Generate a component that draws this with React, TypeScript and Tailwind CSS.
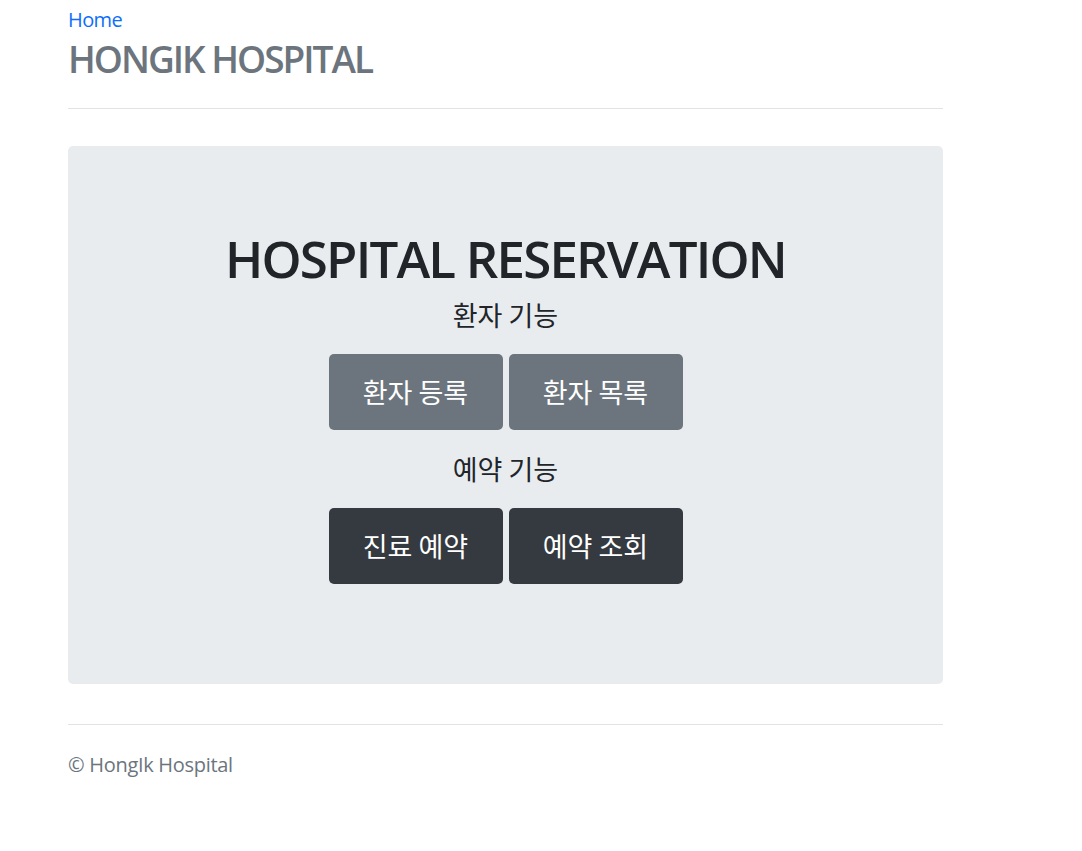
const kr = "text-[27px] [font-family:'Noto_Sans_CJK_KR',sans-serif]";

function Btn({ label, dark }: { label: string; dark?: boolean }) {
  return (
    <button
      className={
        dark
          ? `h-[76px] w-[174px] rounded-[5px] bg-[#343a40] text-white ${kr}`
          : `h-[76px] w-[174px] rounded-[5px] bg-[#6c757d] text-white ${kr}`
      }
    >
      {label}
    </button>
  );
}

export default function App() {
  const font = { fontFamily: '"Open Sans", "Noto Sans CJK KR", sans-serif' };
  return (
    <div className="min-h-screen bg-white" style={font}>
      <div className="ml-[68px] w-[875px] pt-[5px]">
        <a href="#" className="block text-[20px] leading-[30px] tracking-[-0.6px] text-[#0d6efd]">
          Home
        </a>
        <h1 className="mt-[1px] text-[37px] font-semibold leading-[46px] tracking-[-2px] text-[#6c757d]">
          HONGIK HOSPITAL
        </h1>
        <hr className="mt-[26px] border-t border-[#e3e3e3]" />

        <div className="mt-[37px] flex flex-col items-center rounded-[5px] bg-[#e9ecef] pt-[81px] pb-[100px]">
          <h2 className="text-[51px] font-semibold leading-[63px] tracking-[-1.8px] text-[#212529]">
            HOSPITAL RESERVATION
          </h2>
          <p className={`mt-[7px] leading-[36px] text-[#212529] ${kr}`}>환자 기능</p>
          <div className="mt-[21px] flex gap-[6px]">
            <Btn label="환자 등록" />
            <Btn label="환자 목록" />
          </div>
          <p className={`mt-[21px] leading-[36px] text-[#212529] ${kr}`}>예약 기능</p>
          <div className="mt-[21px] flex gap-[6px]">
            <Btn label="진료 예약" dark />
            <Btn label="예약 조회" dark />
          </div>
        </div>

        <hr className="mt-[40px] border-t border-[#e3e3e3]" />
        <p className="mt-[25px] text-[20px] leading-[30px] tracking-[-0.3px] text-[#6c757d]">© HongIk Hospital</p>
      </div>
    </div>
  );
}
